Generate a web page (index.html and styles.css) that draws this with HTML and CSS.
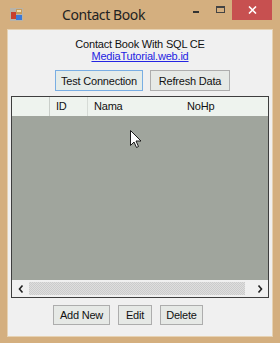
FILE: index.html
```html
<!DOCTYPE html>
<html lang="en">
<head>
  <meta charset="UTF-8">
  <title>Contact Book</title>
  <link rel="stylesheet" href="styles.css">
</head>
<body>
  <div class="window">
    <div class="titlebar">
      <svg class="app-icon" width="13" height="13" viewBox="0 0 13 13">
        <rect x="0" y="0" width="13" height="13" fill="#b8b3a8"/>
        <rect x="1" y="4" width="5" height="7" fill="#c8402e"/>
        <rect x="6" y="1" width="6" height="5" fill="#c89a5a"/>
        <rect x="7" y="2" width="4" height="2" fill="#f0dcb0"/>
        <rect x="6" y="7" width="6" height="5" fill="#3a78d8"/>
      </svg>
      <div class="title">Contact Book</div>
      <div class="controls">
        <div class="ctl"><span class="min-glyph"></span></div>
        <div class="ctl"><span class="max-glyph"></span></div>
        <div class="ctl close">
          <svg width="9" height="8" viewBox="0 0 9 8"><path d="M1 0.5 L8 7.5 M8 0.5 L1 7.5" stroke="#fff" stroke-width="1.6"/></svg>
        </div>
      </div>
    </div>
    <div class="client">
      <div class="heading">
        <div>Contact Book With SQL CE</div>
        <a class="link" href="#">MediaTutorial.web.id</a>
      </div>
      <div class="top-buttons">
        <button class="btn focused btn-test">Test Connection</button>
        <button class="btn btn-refresh">Refresh Data</button>
      </div>
      <div class="grid">
        <div class="grid-header">
          <div class="cell rowhead"></div>
          <div class="cell col-id">ID</div>
          <div class="cell col-nama">Nama</div>
          <div class="cell col-nohp">NoHp</div>
        </div>
        <div class="grid-body">
          <svg class="cursor" width="12" height="19" viewBox="0 0 12 19">
            <path d="M0.5 0.5 L0.5 15.5 L4 12 L6.5 17.5 L8.5 16.5 L6 11 L11 11 Z" fill="#fff" stroke="#1a1a1a" stroke-width="1" stroke-linejoin="miter"/>
          </svg>
        </div>
        <div class="hscroll">
          <div class="arrow-btn">
            <svg width="6" height="8" viewBox="0 0 6 8"><path d="M4.5 0.5 L1.5 4 L4.5 7.5" fill="none" stroke="#222" stroke-width="1.6"/></svg>
          </div>
          <div class="thumb"></div>
          <div class="track"></div>
          <div class="arrow-btn">
            <svg width="6" height="8" viewBox="0 0 6 8"><path d="M1.5 0.5 L4.5 4 L1.5 7.5" fill="none" stroke="#222" stroke-width="1.6"/></svg>
          </div>
        </div>
      </div>
      <div class="bottom-buttons">
        <button class="btn btn-add">Add New</button>
        <button class="btn btn-edit">Edit</button>
        <button class="btn btn-delete">Delete</button>
      </div>
    </div>
  </div>
</body>
</html>
```

FILE: styles.css
```css
* { box-sizing: border-box; }
body { margin: 0; background: #d4af7f; font-family: "Liberation Sans", Arial, sans-serif; font-size: 11px; letter-spacing: -0.2px; color: #111; }
.window { width: 280px; height: 343px; display: flex; flex-direction: column; }

.titlebar { height: 30px; display: flex; align-items: flex-start; }
.app-icon { margin: 8px 0 0 10px; flex: none; }
.title { flex: 1; text-align: center; font-family: "Noto Sans", sans-serif; font-size: 14px; letter-spacing: -0.4px; line-height: 20px; padding-top: 5px; color: #222; }
.controls { display: flex; margin-right: 8px; }
.ctl { width: 24px; height: 20px; display: flex; align-items: center; justify-content: center; }
.min-glyph { width: 6px; height: 2px; background: #333; margin-top: 4px; }
.max-glyph { width: 9px; height: 7px; border: 1px solid #444; border-top-width: 2px; margin-top: -2px; }
.close { width: 40px; background: #c75050; }

.client { flex: 1; margin: 0 8px 7px; background: #f0f0f0; box-shadow: 0 0 0 1px #e6d2b3; padding-top: 8px; display: flex; flex-direction: column; }
.heading { text-align: center; line-height: 12px; }
.link { color: #2424e2; text-decoration: underline; }

.btn { font-family: "Liberation Sans", Arial, sans-serif; font-size: 11px; letter-spacing: -0.2px; color: #111; background: #e6e9e6; border: 1px solid #adadad; padding: 0; height: 20px; }
.btn.focused { border-color: #79aee3; background: #e5ece9; }
.top-buttons { display: flex; justify-content: center; gap: 7px; margin-top: 8px; padding-left: 5px; }
.btn-test { width: 88px; height: 21px; }
.btn-refresh { width: 80px; height: 21px; }

.grid { margin: 5px 3px 0; height: 202px; border: 1px solid #3e3e3e; display: flex; flex-direction: column; }
.grid-header { height: 19px; display: flex; background: #eef3ee; flex: none; }
.cell { line-height: 19px; padding-left: 6px; }
.rowhead { width: 38px; border-right: 1px solid #c9cec9; }
.col-id { width: 38px; border-right: 1px solid #d6dbd6; }
.col-nama { width: 94px; }
.col-nohp { flex: 1; padding-left: 5px; }
.grid-body { flex: 1; background: #a0a59d; position: relative; }
.cursor { position: absolute; left: 118px; top: 14px; }
.hscroll { height: 17px; display: flex; background: #f0f0f0; flex: none; }
.arrow-btn { width: 17px; display: flex; align-items: center; justify-content: center; }
.thumb { width: 216px; margin: 2px 0; background: repeating-conic-gradient(#cbcbcb 0 25%, #dedede 0 50%) 0 0 / 2px 2px; }
.track { flex: 1; }

.bottom-buttons { display: flex; gap: 8px; margin-top: 7px; padding-left: 45px; }
.btn-add { width: 57px; }
.btn-edit { width: 34px; }
.btn-delete { width: 43px; }
```
